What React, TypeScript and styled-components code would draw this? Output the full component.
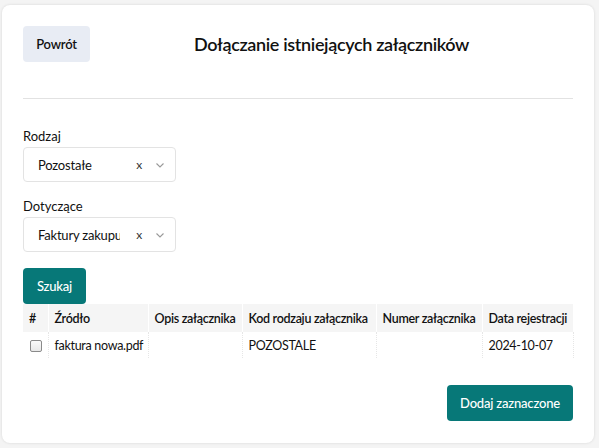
import React from "react";
import styled, { createGlobalStyle } from "styled-components";

const Global = createGlobalStyle`
  html, body { margin: 0; padding: 0; background: #f4f4f4; }
  body { font-family: "Lato", "Open Sans", sans-serif; color: #111; }
  * { box-sizing: border-box; }
`;

const Page = styled.div`
  padding: 5px 5px 5px 2px;
  width: 599px;
  height: 448px;
`;

const Card = styled.div`
  background: #fff;
  border-radius: 8px;
  box-shadow: 0 0 3px rgba(0, 0, 0, 0.12);
  height: 438px;
  padding: 21px 21px 0 21px;
  display: flex;
  flex-direction: column;
`;

const Header = styled.div`
  display: flex;
  align-items: center;
  height: 36px;
`;

const BackButton = styled.button`
  height: 36px;
  width: 67px;
  border: none;
  border-radius: 4px;
  background: #e8ecf4;
  font-family: inherit;
  font-size: 13px;
  font-weight: 600;
  letter-spacing: -0.2px;
  color: #111;
  padding: 0;
`;

const Title = styled.h1`
  flex: 1;
  margin: 0;
  text-align: center;
  font-size: 18px;
  font-weight: 600;
  letter-spacing: -0.35px;
  color: #111;
`;

const Divider = styled.hr`
  border: none;
  border-top: 1px solid #e2e2e2;
  margin: 36px 0 29px;
`;

const Field = styled.div<{ $gap?: number }>`
  display: flex;
  flex-direction: column;
  gap: 3px;
  margin-bottom: ${(p) => p.$gap ?? 0}px;
`;

const Label = styled.label`
  font-size: 13px;
  line-height: 16px;
  color: #111;
`;

const SelectBox = styled.div`
  width: 153px;
  height: 35px;
  border: 1px solid #e3e3e3;
  border-radius: 4px;
  display: flex;
  align-items: center;
  padding: 0 10px 0 14px;
  font-size: 13px;
  letter-spacing: -0.2px;
`;

const SelectValue = styled.span`
  flex: 1;
  white-space: nowrap;
  overflow: hidden;
  margin-right: 16px;
`;

const Clear = styled.span`
  font-size: 12px;
  color: #333;
  margin-right: 13px;
`;

const Chevron = () => (
  <svg width="10" height="10" viewBox="0 0 10 10">
    <path d="M1.5 3.5 L5 7 L8.5 3.5" fill="none" stroke="#999" strokeWidth="1.1" />
  </svg>
);

const PrimaryButton = styled.button<{ $w: number }>`
  width: ${(p) => p.$w}px;
  height: 36px;
  border: none;
  border-radius: 4px;
  background: #077878;
  color: #fff;
  font-family: inherit;
  font-size: 13px;
  font-weight: 500;
  letter-spacing: -0.2px;
  padding: 0;
`;

const Table = styled.table`
  border-collapse: collapse;
  table-layout: fixed;
  width: 550px;
  font-size: 12.5px;
  letter-spacing: -0.3px;
`;

const Th = styled.th<{ $w: number }>`
  width: ${(p) => p.$w}px;
  height: 28px;
  background: #f5f5f5;
  text-align: left;
  font-weight: 600;
  padding: 0 6px;
  white-space: nowrap;
  overflow: hidden;
  border-left: 1px solid #fff;
  &:first-child { border-left: none; }
`;

const Td = styled.td`
  height: 26px;
  padding: 0 6px;
  white-space: nowrap;
  overflow: hidden;
  border-left: 1px dotted #e6e6e6;
  &:first-child { border-left: none; }
  &:last-child { border-right: 1px dotted #e6e6e6; }
`;

const Check = styled.span`
  display: inline-block;
  width: 12px;
  height: 12px;
  border: 1px solid #8a8a8a;
  border-radius: 2px;
  background: linear-gradient(#fafafa, #e8e8e8);
  vertical-align: middle;
  margin-left: 1px;
`;

const Footer = styled.div`
  display: flex;
  justify-content: flex-end;
  margin-top: 27px;
`;

const columns: [string, number][] = [
  ["#", 25],
  ["Źródło", 100],
  ["Opis załącznika", 94],
  ["Kod rodzaju załącznika", 134],
  ["Numer załącznika", 106],
  ["Data rejestracji", 91],
];

export default function App() {
  return (
    <Page>
      <Global />
      <Card>
        <Header>
          <BackButton>Powrót</BackButton>
          <Title>Dołączanie istniejących załączników</Title>
        </Header>
        <Divider />
        <Field $gap={16}>
          <Label>Rodzaj</Label>
          <SelectBox>
            <SelectValue>Pozostałe</SelectValue>
            <Clear>x</Clear>
            <Chevron />
          </SelectBox>
        </Field>
        <Field $gap={16}>
          <Label>Dotyczące</Label>
          <SelectBox>
            <SelectValue>Faktury zakupu</SelectValue>
            <Clear>x</Clear>
            <Chevron />
          </SelectBox>
        </Field>
        <div>
          <PrimaryButton $w={63}>Szukaj</PrimaryButton>
        </div>
        <Table>
          <thead>
            <tr>
              {columns.map(([c, w]) => (
                <Th key={c} $w={w}>{c}</Th>
              ))}
            </tr>
          </thead>
          <tbody>
            <tr>
              <Td><Check /></Td>
              <Td>faktura nowa.pdf</Td>
              <Td></Td>
              <Td>POZOSTALE</Td>
              <Td></Td>
              <Td>2024-10-07</Td>
            </tr>
          </tbody>
        </Table>
        <Footer>
          <PrimaryButton $w={126}>Dodaj zaznaczone</PrimaryButton>
        </Footer>
      </Card>
    </Page>
  );
}
